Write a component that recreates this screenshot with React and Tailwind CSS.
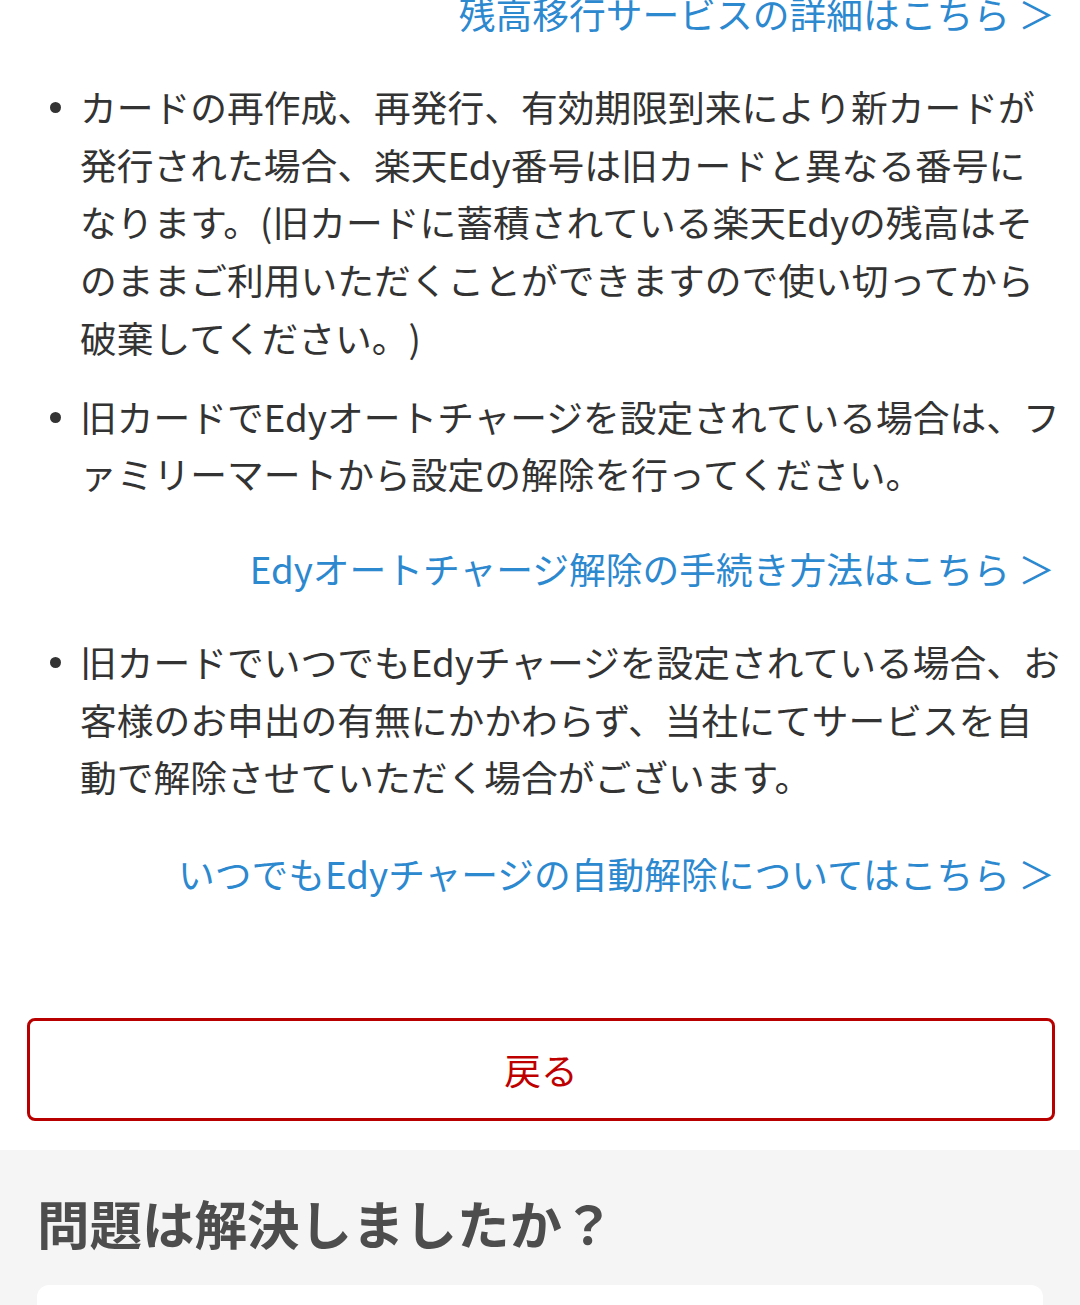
import React from "react";

const font = { fontFamily: '"Noto Sans CJK JP", "Noto Sans", sans-serif' };

// right-aligned blue link row
function MoreLink({ children, className = "" }) {
  return (
    <div className={"text-right text-[36.75px] leading-[57.75px] text-[#2c88cf] " + className}>
      <a href="#">{children}</a>
    </div>
  );
}

// lines are broken by hand to follow the original wrapping
function Bullet({ lines, className = "" }) {
  return (
    <li className={"flex " + className}>
      <span className="w-[53px] shrink-0">
        <span className="mt-[24px] ml-[23px] block h-[11px] w-[11px] rounded-full bg-[#333]" />
      </span>
      <span className="w-[990px] shrink-0">
        {lines.map((l, i) => (
          <span key={i} className="block">
            {l}
          </span>
        ))}
      </span>
    </li>
  );
}

function App() {
  return (
    <div
      lang="ja"
      className="min-h-[1305px] overflow-hidden bg-white text-[#333] [line-break:loose] [text-spacing-trim:space-all]"
      style={font}
    >
      {/* notes section */}
      <section className="pl-[27px] pr-[25px]">
        <MoreLink className="-mt-[15px]">残高移行サービスの詳細はこちら ＞</MoreLink>

        <ul className="mt-[35px] text-[36.75px] leading-[57.75px]">
          <Bullet
            lines={[
              "カードの再作成、再発行、有効期限到来により新カードが",
              "発行された場合、楽天Edy番号は旧カードと異なる番号に",
              "なります。(旧カードに蓄積されている楽天Edyの残高はそ",
              "のままご利用いただくことができますので使い切ってから",
              "破棄してください。)",
            ]}
          />
          <Bullet
            className="mt-[21px]"
            lines={[
              "旧カードでEdyオートチャージを設定されている場合は、フ",
              "ァミリーマートから設定の解除を行ってください。",
            ]}
          />
        </ul>

        <MoreLink className="mt-[37px]">Edyオートチャージ解除の手続き方法はこちら ＞</MoreLink>

        <ul className="mt-[35px] text-[36.75px] leading-[57.75px]">
          <Bullet
            lines={[
              "旧カードでいつでもEdyチャージを設定されている場合、お",
              "客様のお申出の有無にかかわらず、当社にてサービスを自",
              "動で解除させていただく場合がございます。",
            ]}
          />
        </ul>

        <MoreLink className="mt-[39px]">いつでもEdyチャージの自動解除についてはこちら ＞</MoreLink>

        {/* back button */}
        <button className="mt-[115px] flex h-[103px] w-full items-center justify-center rounded-[8px] border-[3px] border-[#b80000] bg-white text-[36.75px] text-[#bf0000]">
          戻る
        </button>
      </section>

      {/* feedback section */}
      <section className="mt-[29px] bg-[#f5f5f5] px-[37px] pb-[40px] pt-[34px]">
        <h2 className="text-[52.5px] font-bold leading-[76px] text-[#4d4d4d]">問題は解決しましたか？</h2>
        <div className="mt-[25px] h-[200px] rounded-[12px] bg-white" />
      </section>
    </div>
  );
}

export default App;
